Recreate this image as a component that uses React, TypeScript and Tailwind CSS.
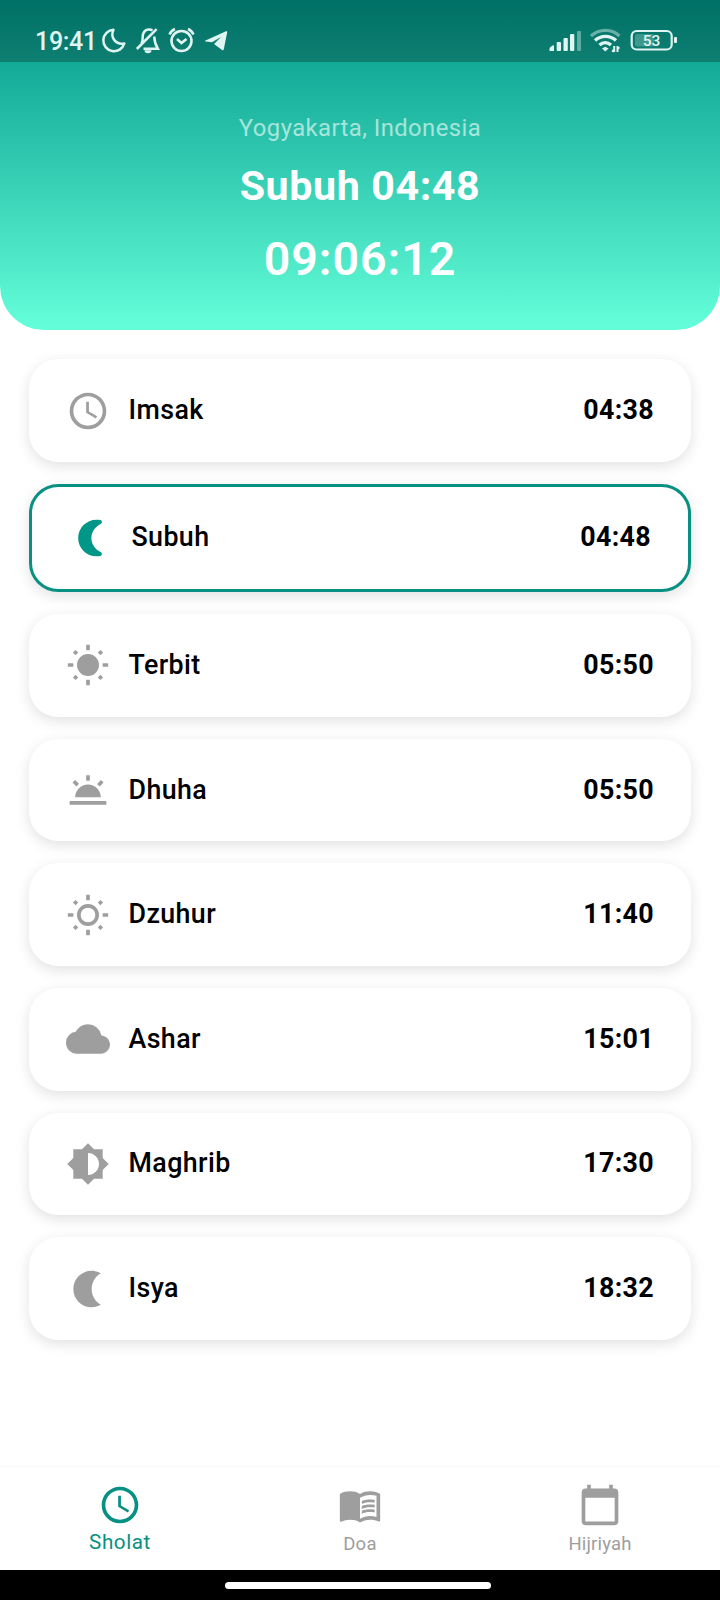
import type { ReactNode } from "react";
import {
  MdAccessTime,
  MdBrightnessMedium,
  MdCalendarToday,
  MdCloud,
  MdMenuBook,
  MdWbTwilight,
} from "react-icons/md";

function Crescent({ className }: { className?: string }) {
  return (
    <svg viewBox="0 0 24 24" fill="currentColor" className={className}>
      <path d="M15 2C9.480 2 5 6.480 5 12s4.480 10 10 10c.72 0 1.420-.08 2.100-.22.95-.2 1.200-1.450.38-1.970C14.200 18.200 12.200 15.300 12.200 12s2-6.200 5.280-7.810c.82-.52.57-1.770-.38-1.970C16.420 2.080 15.720 2 15 2z" />
    </svg>
  );
}

function NightMoon({ className }: { className?: string }) {
  return (
    <svg viewBox="0 0 24 24" fill="currentColor" className={className}>
      <path d="M14 2c1.820 0 3.530.5 5 1.350-2.990 1.730-5 4.950-5 8.650s2.010 6.920 5 8.650C17.530 21.500 15.820 22 14 22 8.480 22 4 17.520 4 12S8.480 2 14 2z" />
    </svg>
  );
}

function Sun({ className, outline }: { className?: string; outline?: boolean }) {
  return (
    <svg viewBox="0 0 24 24" fill="none" stroke="currentColor" strokeWidth="2" className={className}>
      <path d="M12 1v3M12 20v3M1 12h3M20 12h3M4.500 4.500l1.450 1.450M18.050 18.050l1.450 1.450M4.500 19.500l1.450-1.450M18.050 5.950l1.450-1.450" />
      <circle cx="12" cy="12" r="5" fill={outline ? "none" : "currentColor"} />
    </svg>
  );
}

const iconClass = "size-11 shrink-0";

type Prayer = { name: string; time: string; icon: ReactNode; active?: boolean };

const prayers: Prayer[] = [
  { name: "Imsak", time: "04:38", icon: <MdAccessTime className={iconClass} /> },
  { name: "Subuh", time: "04:48", icon: <Crescent className={iconClass} />, active: true },
  { name: "Terbit", time: "05:50", icon: <Sun className={iconClass} /> },
  { name: "Dhuha", time: "05:50", icon: <MdWbTwilight className={iconClass} /> },
  { name: "Dzuhur", time: "11:40", icon: <Sun outline className={iconClass} /> },
  { name: "Ashar", time: "15:01", icon: <MdCloud className={iconClass} /> },
  { name: "Maghrib", time: "17:30", icon: <MdBrightnessMedium className={iconClass} /> },
  { name: "Isya", time: "18:32", icon: <NightMoon className={iconClass} /> },
];

function PrayerCard({ name, time, icon, active }: Prayer) {
  return (
    <div
      className={
        "flex items-center rounded-[29.3px] bg-white px-[36.7px] shadow-[0_4px_14px_rgba(0,0,0,0.12)] " +
        (active ? "h-[108.2px] border-3 border-[#089082]" : "h-[102.67px]")
      }
    >
      <span className={active ? "text-[#009688]" : "text-[#9e9e9e]"}>{icon}</span>
      <span className="ml-[18.5px] pb-px text-[26.8px] font-medium leading-[28px] tracking-[0.4px]">{name}</span>
      <span className="ml-auto pb-px text-[26.8px] font-bold leading-[28px] tracking-[0.35px]">{time}</span>
    </div>
  );
}

function StatusBar() {
  return (
    <div className="flex h-[62px] items-start bg-black/25 text-[#e0f5f1]">
      <span className="ml-[35px] mt-[27px] w-[60px] whitespace-nowrap text-left text-[25px] font-medium leading-[30px] tracking-[-0.3px]">
        19:41
      </span>
      <svg width="140" height="30" viewBox="100 25 140 30" className="ml-[5px] mt-[25px]" fill="none" stroke="currentColor" strokeWidth="2.5">
        <path d="M113.500 29.800a10.700 10.700 0 1 0 10.800 13.700c-8.600 1.600-14.500-6-10.800-13.700z" strokeLinejoin="round" />
        <path d="M141.300 43.500c1.200-1.600 1.400-3.500 1.400-6 0-4.500 2.200-7.500 5.800-7.900 1.600-.1 3 .3 4 1M154.300 36.500c0 5 .7 7.500 3.500 12.200H143.500M136.800 49L156.600 29.200" />
        <path d="M144.500 50.200h7a3.500 3 0 0 1-7 0z" fill="currentColor" stroke="none" />
        <circle cx="181.500" cy="41" r="10" strokeWidth="2.600" />
        <path d="M177 39l4.500 4 5-4M169.500 34.500c1-2.500 3-4.500 5.500-5.500M188 29c2.500 1 4.500 3 5.500 5.500" strokeWidth="2.600" />
        <path d="M205.500 40.500L226 31.300c.8-.3 1.400.2 1.200 1l-3.400 17c-.2 1-1 1.200-1.800.7l-8-6 7-7-9 5.300-6.500-.8c-.8-.3-.8-.7 0-1z" fill="currentColor" stroke="none" />
      </svg>
      <svg width="130" height="30" viewBox="548 25 130 30" className="ml-auto mr-[42px] mt-[25px]" fill="none" stroke="currentColor">
        <g fill="currentColor" stroke="none">
          <path d="M549.500 48.500q0-1 1-1.500l2-1.500q1.500-.8 1.500.7v4.800h-4.500z" />
          <rect x="556.700" y="42" width="4.300" height="9" rx="1" />
          <rect x="563.500" y="38" width="4.300" height="13" rx="1" />
          <rect x="570" y="34" width="4.300" height="17" rx="1" />
          <rect x="577" y="31" width="4" height="20" rx="1" opacity=".4" />
          <path d="M602 48.500l3.300-1.700 3.300 1.700-3.300 3z" />
        </g>
        <path d="M591 36c8-7.500 21-7.500 28.500 0" strokeWidth="3.200" opacity=".45" />
        <path d="M595 40.500c6-5.500 15-5.500 21 0M599.500 45c3.500-3 8-3 11.500 0" strokeWidth="3.400" />
        <path d="M614.200 46v6M612 50.500l2 1M617.500 52v-6M617.500 47l2 1.500" strokeWidth="2" />
        <rect x="631.700" y="31" width="40" height="18.500" rx="5" strokeWidth="2.200" />
        <rect x="635" y="34" width="19" height="12.500" rx="2" fill="currentColor" stroke="none" opacity=".25" />
        <rect x="674" y="37" width="3" height="6" rx="1" fill="currentColor" stroke="none" />
        <text x="651.500" y="45.900" textAnchor="middle" fontSize="15.500" fontWeight="500" fill="currentColor" stroke="none">53</text>
      </svg>
    </div>
  );
}

export default function App() {
  return (
    <div className="flex h-[1600px] w-[720px] flex-col overflow-hidden bg-white font-[Roboto,sans-serif] text-black">
      <header className="flex h-[330px] shrink-0 flex-col overflow-hidden rounded-b-[44px] bg-[linear-gradient(to_bottom,#009688,#64ffda)] text-center text-white">
        <StatusBar />
        <p className="mt-[52px] text-[23.8px] leading-[28px] tracking-[0.45px] text-white/60">Yogyakarta, Indonesia</p>
        <p className="mt-[20px] text-[41.2px] font-bold leading-[48px] tracking-[0.6px]">Subuh 04:48</p>
        <p className="mt-[22px] text-[46.5px] font-semibold leading-[54px] tracking-[1px]">09:06:12</p>
      </header>

      <main className="flex grow flex-col gap-[22px] px-[29.3px] pt-[29.2px]">
        {prayers.map((p) => (
          <PrayerCard key={p.name} {...p} />
        ))}
      </main>

      <nav className="grid h-[104px] shrink-0 grid-cols-3 border-t border-[#f8f8f8] bg-white text-[#9e9e9e]">
        <div className="flex flex-col items-center pt-[16px] text-[#089082]">
          <MdAccessTime className="size-11" />
          <span className="mt-[3px] text-[20.7px] leading-[24px] tracking-[0.55px]">Sholat</span>
        </div>
        <div className="flex flex-col items-center pt-[16px]">
          <MdMenuBook className="size-11" />
          <span className="mt-[6px] text-[18.5px] leading-[22px] tracking-[0.3px]">Doa</span>
        </div>
        <div className="flex flex-col items-center pt-[16px]">
          <MdCalendarToday className="size-11" />
          <span className="mt-[6px] text-[18.5px] leading-[22px] tracking-[0.15px]">Hijriyah</span>
        </div>
      </nav>

      <div className="flex h-[30px] shrink-0 justify-center bg-black pt-3">
        <div className="mr-[4px] h-[7px] w-[266px] rounded-full bg-white" />
      </div>
    </div>
  );
}
